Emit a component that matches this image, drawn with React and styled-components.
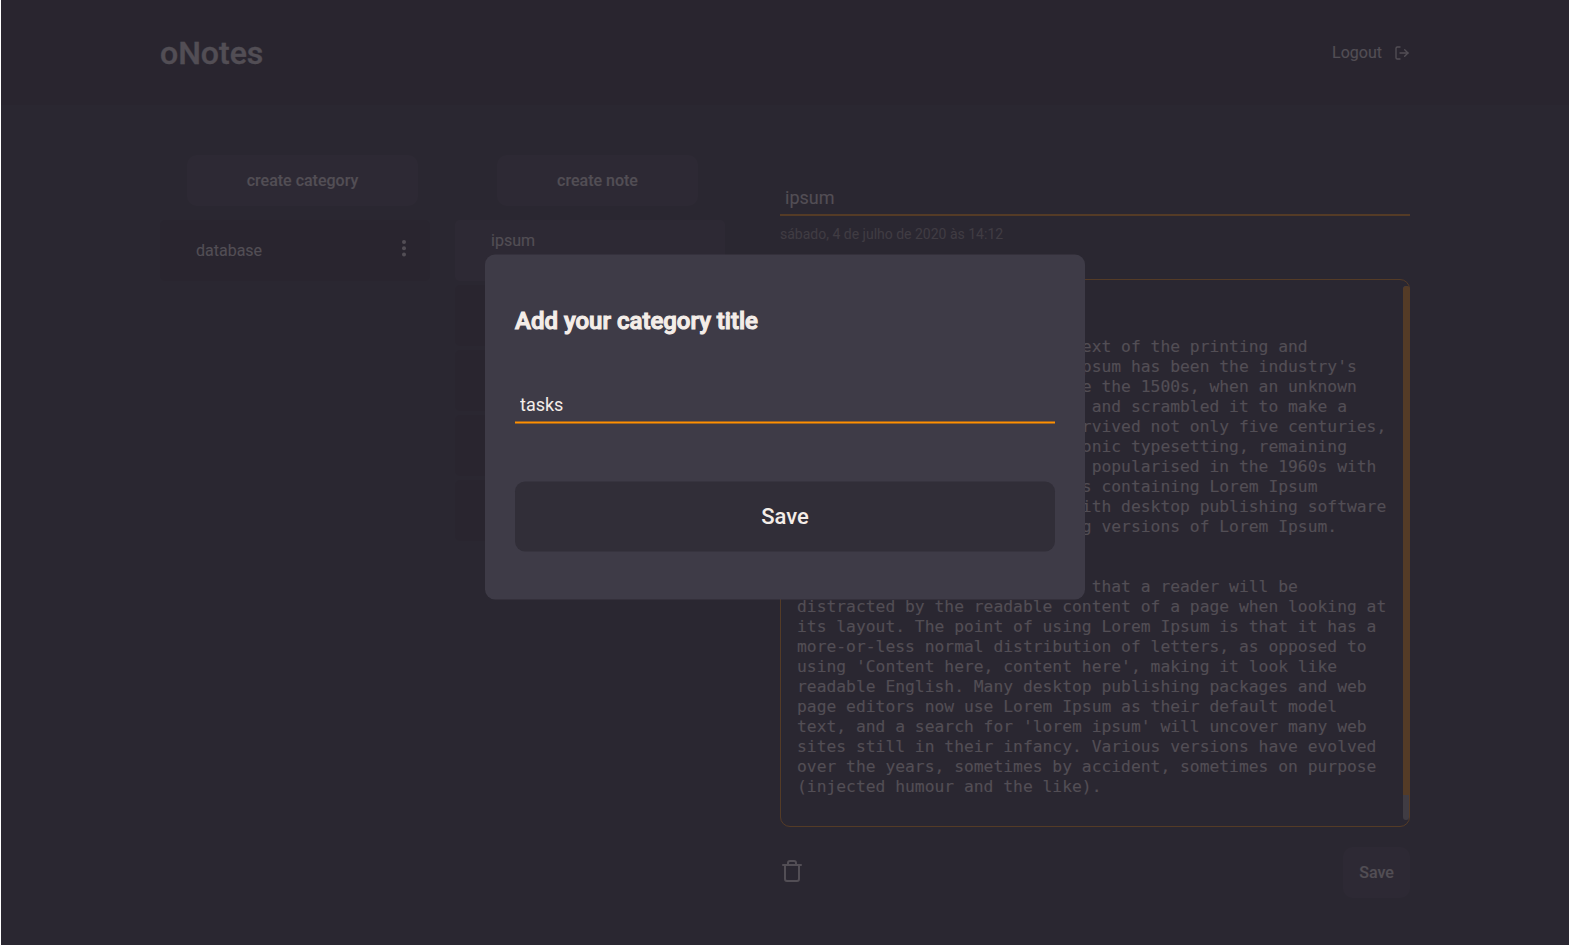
import React from 'react';
import styled, { createGlobalStyle } from 'styled-components';
import { FiLogOut, FiTrash } from 'react-icons/fi';

const GlobalStyle = createGlobalStyle`
  * { box-sizing: border-box; margin: 0; padding: 0; }
  body {
    background: #312e38;
    color: #f4ede8;
    font: 400 16px/19px Roboto, sans-serif;
    overflow: hidden;
  }
  button, input { font-family: inherit; color: inherit; border: 0; outline: 0; }
`;

const Page = styled.div`
  height: 945px;
  border: solid #ffffff;
  border-width: 0 1px;
`;

const Header = styled.header`
  height: 105px;
  background: #28262e;
`;

const HeaderContent = styled.div`
  width: 1250px;
  height: 105px;
  margin: 0 auto;
  display: flex;
  align-items: center;
  justify-content: space-between;
`;

const Logo = styled.h1`
  font-size: 32px;
  line-height: 38px;
  font-weight: 500;
  -webkit-text-stroke: 0.3px currentColor;
`;

const Logout = styled.a`
  display: flex;
  align-items: center;
  gap: 12px;
`;

const Main = styled.main`
  width: 1250px;
  margin: 50px auto 0;
  display: flex;
`;

const Column = styled.section`
  width: 285px;
  margin-right: ${({ $gap }) => $gap}px;
  display: flex;
  flex-direction: column;
  align-items: center;
`;

const Button = styled.button`
  width: ${({ $width }) => $width}px;
  height: 51px;
  border-radius: 10px;
  background: #3e3b47;
  font-size: 16px;
  font-weight: 500;
`;

const List = styled.ul`
  width: 285px;
  margin-top: 14px;
  list-style: none;
  display: flex;
  flex-direction: column;
  gap: 4px;
`;

const Item = styled.li`
  width: 270px;
  height: 61px;
  padding: ${({ $top }) => $top}px 23px 0 36px;
  border-radius: 5px;
  background: ${({ $active }) => ($active ? '#3e3b47' : '#28262e')};
  display: flex;
  justify-content: space-between;
  align-items: flex-start;
`;

const Editor = styled.section`
  width: 630px;
  padding-top: 25px;
`;

const TitleInput = styled.input`
  display: block;
  width: 100%;
  height: 36px;
  padding: 1px 5px 0;
  background: transparent;
  border-bottom: 2px solid #ff9000;
  font-size: 18px;
`;

const NoteDate = styled.p`
  margin-top: 9px;
  font-size: 14px;
  line-height: 18px;
  color: #999591;
`;

const NoteBox = styled.div`
  height: 548px;
  margin-top: 36px;
  border: 1px solid #ff9000;
  border-radius: 10px;
  display: flex;
  justify-content: space-between;
`;

const NoteText = styled.pre`
  padding: 17px 0 0 16px;
  font: 16.32px/20px 'DejaVu Sans Mono', monospace;
`;

const ScrollTrack = styled.div`
  width: 6px;
  margin: 6px 0;
  border-radius: 4px;
  background: #999591;
`;

const ScrollThumb = styled.div`
  width: 7px;
  height: 509px;
  border-radius: 4px 4px 0 0;
  background: #ff9000;
`;

const Actions = styled.div`
  margin-top: 20px;
  display: flex;
  justify-content: space-between;
  align-items: flex-start;
`;

const TrashIcon = styled(FiTrash)`
  margin-top: 12px;
`;

const Overlay = styled.div`
  position: absolute;
  inset: 0 1px;
  height: 945px;
  padding-top: 255px;
  background: rgba(41, 38, 47, 0.8);
`;

const Modal = styled.form`
  width: 600px;
  height: 345px;
  margin: 0 auto;
  padding: 47px 30px 0;
  border-radius: 10px;
  background: #3e3b47;
  transform: translateY(-0.5px);
`;

const ModalTitle = styled.h2`
  font-size: 24px;
  line-height: 38px;
  font-weight: 500;
  letter-spacing: 0;
  -webkit-text-stroke: 1.1px currentColor;
`;

const ModalInput = styled.input`
  display: block;
  width: 100%;
  height: 37px;
  margin-top: 47px;
  padding: 0 5px;
  background: transparent;
  border-bottom: 2px solid #ff9000;
  font-size: 18px;
`;

const ModalButton = styled.button`
  display: block;
  width: 100%;
  height: 70px;
  margin-top: 58px;
  padding-bottom: 2px;
  border-radius: 10px;
  background: #312e38;
  font-size: 22px;
  font-weight: 500;
`;

const MoreDots = styled.svg`
  margin-top: -1px;
`;

const note = `What is Lorem Ipsum?

Lorem Ipsum is simply dummy text of the printing and
typesetting industry. Lorem Ipsum has been the industry's
standard dummy text ever since the 1500s, when an unknown
printer took a galley of type and scrambled it to make a
type specimen book. It has survived not only five centuries,
but also the leap into electronic typesetting, remaining
essentially unchanged. It was popularised in the 1960s with
the release of Letraset sheets containing Lorem Ipsum
passages, and more recently with desktop publishing software
like Aldus PageMaker including versions of Lorem Ipsum.

Why do we use it?
It is a long established fact that a reader will be
distracted by the readable content of a page when looking at
its layout. The point of using Lorem Ipsum is that it has a
more-or-less normal distribution of letters, as opposed to
using 'Content here, content here', making it look like
readable English. Many desktop publishing packages and web
page editors now use Lorem Ipsum as their default model
text, and a search for 'lorem ipsum' will uncover many web
sites still in their infancy. Various versions have evolved
over the years, sometimes by accident, sometimes on purpose
(injected humour and the like).`;

const MoreIcon = () => (
  <MoreDots width="6" height="18" viewBox="0 0 6 18" fill="currentColor">
    <circle cx="3" cy="2" r="2" />
    <circle cx="3" cy="8.3" r="2" />
    <circle cx="3" cy="14.6" r="2" />
  </MoreDots>
);

export default function App() {
  return (
    <>
      <GlobalStyle />
      <Page>
        <Header>
          <HeaderContent>
            <Logo>oNotes</Logo>
            <Logout>
              Logout
              <FiLogOut size={16} />
            </Logout>
          </HeaderContent>
        </Header>
        <Main>
          <Column $gap={10}>
            <Button $width={231}>create category</Button>
            <List>
              <Item $top={21}>
                <span>database</span>
                <MoreIcon />
              </Item>
            </List>
          </Column>
          <Column $gap={40}>
            <Button $width={201}>create note</Button>
            <List>
              <Item $top={11} $active>
                <span>ipsum</span>
              </Item>
              <Item />
              <Item />
              <Item />
              <Item />
            </List>
          </Column>
          <Editor>
            <TitleInput defaultValue="ipsum" />
            <NoteDate>sábado, 4 de julho de 2020 às 14:12</NoteDate>
            <NoteBox>
              <NoteText>{note}</NoteText>
              <ScrollTrack>
                <ScrollThumb />
              </ScrollTrack>
            </NoteBox>
            <Actions>
              <TrashIcon size={24} />
              <Button $width={67}>Save</Button>
            </Actions>
          </Editor>
        </Main>
      </Page>
      <Overlay>
        <Modal>
          <ModalTitle>Add your category title</ModalTitle>
          <ModalInput defaultValue="tasks" />
          <ModalButton type="button">Save</ModalButton>
        </Modal>
      </Overlay>
    </>
  );
}
